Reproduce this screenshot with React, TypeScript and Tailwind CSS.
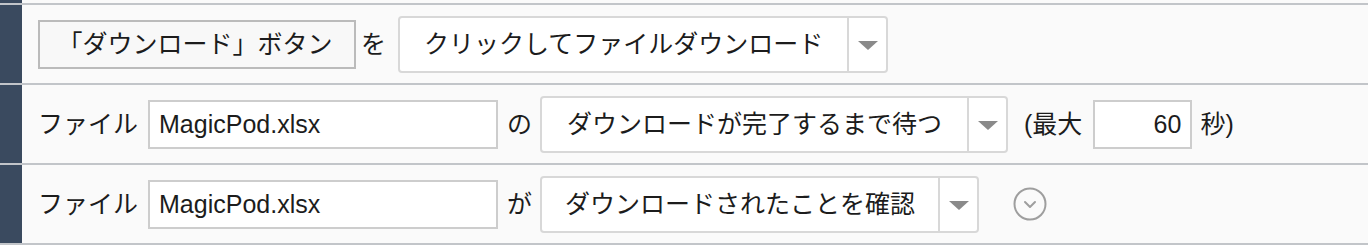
import { ReactNode } from 'react';

const FONT = '"Liberation Sans", "Noto Sans CJK JP", sans-serif';

function Row({ children, last = false }: { children: ReactNode; last?: boolean }) {
  return (
    <div
      className={`flex border-t-2 border-[#c2c5c9] ${last ? 'h-[82px] border-b-2' : 'h-[80px]'}`}
    >
      <div className="w-[22px] shrink-0 bg-[#3a4a5f]" />
      <div className="flex flex-1 items-center bg-[#fafafa] pl-[16px]">{children}</div>
    </div>
  );
}

function Label({ children, className = '' }: { children: ReactNode; className?: string }) {
  return <span className={`leading-none whitespace-nowrap ${className}`}>{children}</span>;
}

function Select({ label, pad = 'px-[23px]' }: { label: string; pad?: string }) {
  return (
    <div className="flex h-[57px] items-stretch rounded-[4px] border-2 border-[#d8d8d8] bg-white">
      <div className={`flex items-center leading-none whitespace-nowrap ${pad}`}>{label}</div>
      <div className="flex w-[39px] items-center justify-center border-l-2 border-[#d8d8d8]">
        <svg width="20" height="10" viewBox="0 0 20 10" className="mt-[3px]">
          <polygon points="0,0 20,0 10,9" fill="#8a8a8a" />
        </svg>
      </div>
    </div>
  );
}

function TextBox({ value, className = '' }: { value: string; className?: string }) {
  return (
    <div
      className={`flex h-[49px] items-center border-2 border-[#cdcdcd] bg-white px-[9px] leading-none ${className}`}
    >
      {value}
    </div>
  );
}

export default function App() {
  return (
    <div className="w-[1368px] text-[25px] text-[#1c1c1c]" style={{ fontFamily: FONT }}>
      <div className="flex h-[3px]">
        <div className="w-[22px] bg-[#3a4a5f]" />
        <div className="flex-1 bg-[#fafafa]" />
      </div>

      <Row>
        <div className="flex h-[49px] w-[318px] items-center justify-center border-2 border-[#bbbbbb] bg-[#f8f8f8] pr-[4px] leading-none">
          「ダウンロード」ボタン
        </div>
        <Label className="ml-[5px] mr-[12px]">を</Label>
        <Select label="クリックしてファイルダウンロード" pad="px-[24px]" />
      </Row>

      <Row>
        <Label>ファイル</Label>
        <TextBox value="MagicPod.xlsx" className="ml-[10px] w-[350px]" />
        <Label className="ml-[9px] mr-[8px]">の</Label>
        <Select label="ダウンロードが完了するまで待つ" pad="px-[25px]" />
        <Label className="ml-[16px]">(最大</Label>
        <TextBox value="60" className="ml-[11px] w-[99px] justify-end" />
        <Label className="ml-[8px]">秒)</Label>
      </Row>

      <Row last>
        <Label>ファイル</Label>
        <TextBox value="MagicPod.xlsx" className="ml-[10px] w-[350px]" />
        <Label className="ml-[9px] mr-[8px]">が</Label>
        <Select label="ダウンロードされたことを確認" />
        <svg width="34" height="34" viewBox="0 0 34 34" className="ml-[34px]">
          <circle cx="17" cy="17" r="15.5" fill="none" stroke="#9e9e9e" strokeWidth="2" />
          <polyline
            points="12,15 17,20 22,15"
            fill="none"
            stroke="#9e9e9e"
            strokeWidth="2"
            strokeLinecap="round"
            strokeLinejoin="round"
          />
        </svg>
      </Row>
    </div>
  );
}
